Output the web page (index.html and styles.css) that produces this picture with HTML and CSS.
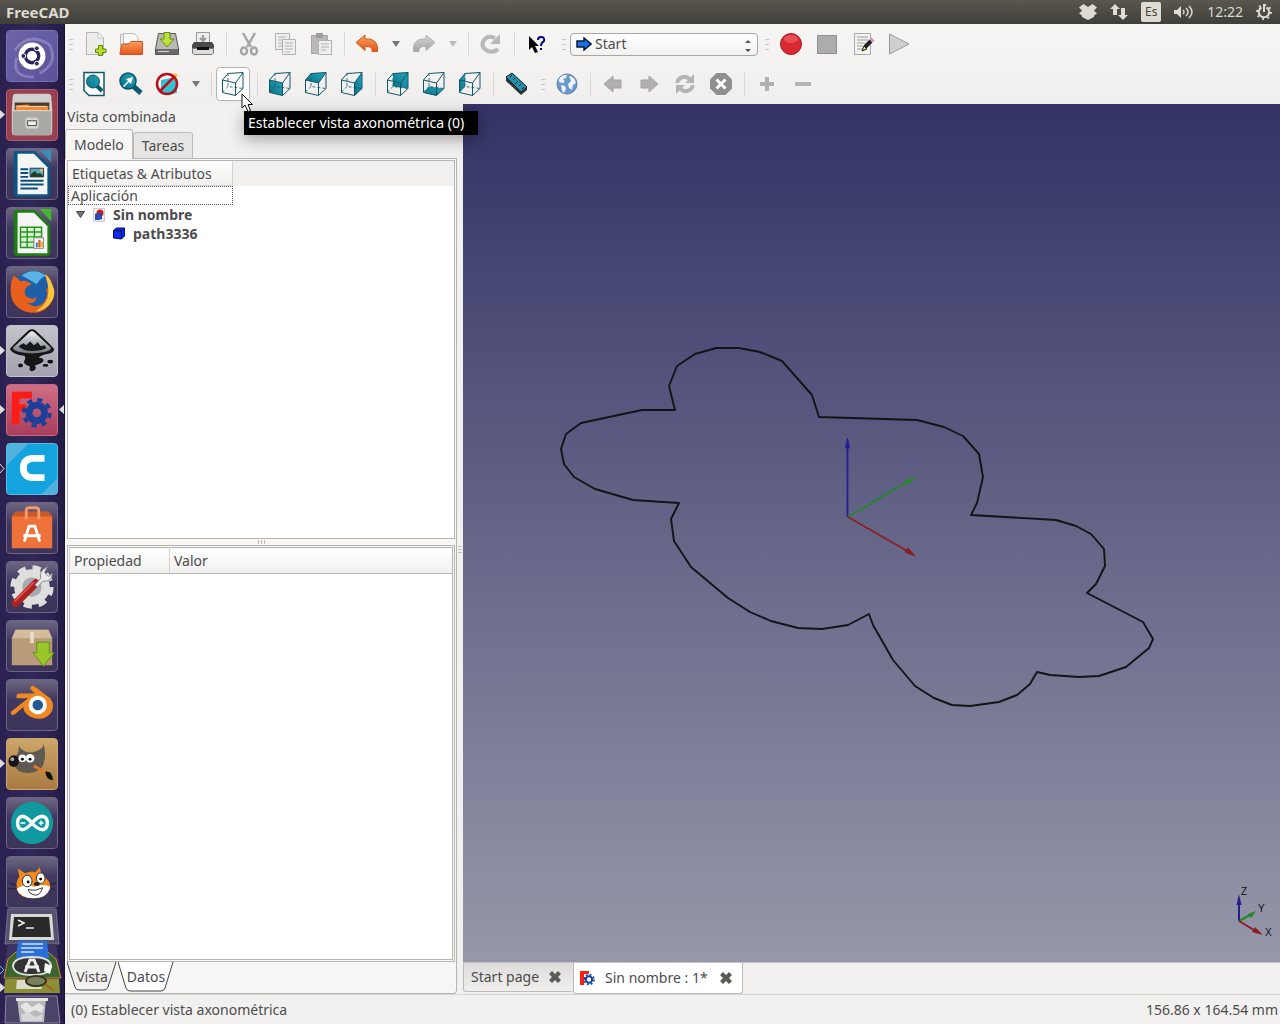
FILE: index.html
```html
<!DOCTYPE html>
<html lang="es">
<head>
<meta charset="utf-8">
<title>FreeCAD</title>
<link rel="stylesheet" href="styles.css">
</head>
<body>
<svg class="defs" aria-hidden="true">
  <defs>
    <linearGradient id="teal" x1="0" y1="1" x2="1" y2="0"><stop offset="0" stop-color="#067085"/><stop offset="1" stop-color="#2aa5ba"/></linearGradient>
    <linearGradient id="orange" x1="0" y1="0" x2="0" y2="1"><stop offset="0" stop-color="#f9a05c"/><stop offset="1" stop-color="#e4551e"/></linearGradient>
    <linearGradient id="grey" x1="0" y1="0" x2="0" y2="1"><stop offset="0" stop-color="#d6d6d5"/><stop offset="1" stop-color="#a3a3a2"/></linearGradient>
    <linearGradient id="steel" x1="0" y1="0" x2="0" y2="1"><stop offset="0" stop-color="#eef1f5"/><stop offset="1" stop-color="#6f7680"/></linearGradient>
    <symbol id="cube" viewBox="0 0 24 26">
      <path d="M7 2V15.500L22 17.500M7 15.500L1 21.500" stroke-dasharray="3 2" stroke-width=".8"/>
      <path d="M1.500 9L14.500 12V24.500L1.500 21.500ZM1.500 9L7 2.500L22 1.500L14.500 12M22 1.500V17.500L14.500 24.500" stroke-width="1"/>
    </symbol>
    <symbol id="freecad" viewBox="0 0 16 16">
      <path d="M1 1h9v3H5v3h3v3H5v5H1z" fill="#ff1f10"/>
      <circle cx="10" cy="9.500" r="3.200" fill="#fff" stroke="#1743a6" stroke-width="2"/>
      <circle cx="10" cy="9.500" r="4.900" fill="none" stroke="#1743a6" stroke-width="1.800" stroke-dasharray="1.900 1.950"/>
    </symbol>
    <symbol id="close" viewBox="0 0 12 12"><path d="M3 0L6 3L9 0L12 3L9 6L12 9L9 12L6 9L3 12L0 9L3 6L0 3Z" fill="#5a5a57"/></symbol>
  </defs>
</svg>

<header class="topbar">
  <h1>FreeCAD</h1>
  <div class="indicators">
    <svg width="18" height="16" viewBox="0 0 18 16"><path d="M4.500 0L9 3L13.500 0L18 3.500L15 6.500L18 9.500L15 11.500V13L9 16L3 13V11.500L0 9.500L3 6.500L0 3.500Z" fill="#dfdbd2"/></svg>
    <svg width="18" height="16" viewBox="0 0 18 16"><path d="M5 0L10 5H7V11H3V5H0ZM13 16L8 11H11V4H15V11H18Z" fill="#dfdbd2"/></svg>
    <span class="lang">Es</span>
    <svg width="20" height="16" viewBox="0 0 20 16" fill="none" stroke="#dfdbd2" stroke-width="1.500"><path d="M0 6h3l4-4v12l-4-4H0z" fill="#dfdbd2" stroke="none"/><path d="M9 6q2 2 0 4M12 4q4 4 0 8M15 2q6 6 0 12"/></svg>
    <span>12:22</span>
    <svg width="16" height="16" viewBox="0 0 16 16" fill="none" stroke="#dfdbd2"><path d="M5.500 3.500A5.200 5.200 0 1 0 10.500 3.500" stroke-width="2"/><circle cx="8" cy="8" r="7" stroke-width="2" stroke-dasharray="1.800 3.700"/><path d="M8 0v8" stroke-width="2"/></svg>
  </div>
</header>

<div class="desktop">
  <nav class="launcher" aria-label="Lanzador">
    <ul>
      <li><button class="tile tile-dash" aria-label="Inicio"><svg viewBox="0 0 52 52"><path d="M8 20Q22 0 44 14M10 28Q4 48 28 48M44 14Q54 34 34 44" stroke="#aaa2d8" stroke-width="3" fill="none" opacity=".5"/><circle cx="26" cy="26" r="14" fill="#fff"/><circle cx="26" cy="26" r="7" fill="none" stroke="#2c2456" stroke-width="3.500"/><g fill="#2c2456" stroke="#fff"><circle cx="17" cy="26" r="2.500"/><circle cx="31" cy="18" r="2.500"/><circle cx="31" cy="34" r="2.500"/></g></svg></button></li>
      <li><svg class="mark" viewBox="0 0 5 9"><path d="M0 0L5 4.500L0 9Z" fill="#ddd"/></svg><button class="tile tile-files" aria-label="Archivos"><svg viewBox="0 0 52 52"><path d="M6 6Q7 4 9 4H43Q45 4 46 6L47 20V44Q47 47 44 47H8Q5 47 5 44V20Z" fill="#d0d0ce"/><path d="M8 13H44V25H8Z" fill="#4c3a30"/><path d="M9 16L22 15L24 17H43V24H9Z" fill="#f08a35"/><path d="M10 17H42" stroke="#fbe0c0"/><path d="M6 21H46V45Q46 47 44 47H8Q6 47 6 45Z" fill="#aaa9a6"/><path d="M6 21.500H46" stroke="#dededc"/><rect x="19.500" y="29" width="13" height="11" rx="2" fill="#d6d6d4" stroke="#c5c5c3"/><rect x="21.500" y="32" width="9" height="5" fill="#eee" stroke="#444"/></svg></button></li>
      <li><button class="tile" aria-label="Writer"><svg viewBox="0 0 52 52"><path d="M9 2H29L45 18V46Q45 50 41 50H11Q7 50 7 46V4Q7 2 9 2Z" fill="#0b5586"/><path d="M11 5H28L42 19V47H11Z" fill="#f5f5f5"/><path d="M34 1H46V14Z" fill="#3c8cba"/><path d="M14 21h8M14 25h8M14 29h8M14 33h24M14 37h24M14 41h18" stroke="#0b4f80" stroke-width="2"/><path d="M24 20H38V29H24Z" fill="#59a9cb" stroke="#234"/><path d="M25 29V26L29 23L32 26L34 25L37 27V29Z" fill="#2b3a20"/><circle cx="36" cy="22" r="1.500" fill="#ffc629"/></svg></button></li>
      <li><button class="tile" aria-label="Calc"><svg viewBox="0 0 52 52"><path d="M9 2H29L45 18V46Q45 50 41 50H11Q7 50 7 46V4Q7 2 9 2Z" fill="#1d7c12"/><path d="M11 5H28L42 19V47H11Z" fill="#f5f5f5"/><path d="M34 1H46V14Z" fill="#44b82c"/><path d="M14 20H36V41H14Z" fill="#d9f5cf" stroke="#279222" stroke-width="1.500"/><path d="M21 20v21M28.500 20v21M14 25h22M14 30h22M14 35.500h22" stroke="#279222" stroke-width="1.500"/><path d="M28 31H38V42H28Z" fill="#fff" stroke="#888"/><path d="M30 41V36h2v5z" fill="#2a7dc0"/><path d="M32.500 41v-8h2.500v8z" fill="#e0602a"/><path d="M35.500 41v-6h2v6z" fill="#e8b02a"/></svg></button></li>
      <li><button class="tile" aria-label="Firefox"><svg viewBox="0 0 52 52"><circle cx="27" cy="25" r="21" fill="#1e5fa8"/><path d="M15 9Q28 0 40 9Q34 12 31 18Q22 12 15 9Z" fill="#58b4e4"/><path d="M7 9Q11 11 14 15Q19 13 23 16L26 18Q20 20 19 23Q17 28 21 31Q27 35 31 31Q29 40 20 37Q31 45 39 36Q44 29 40 21Q48 28 45 14Q53 29 44 40Q35 50 22 47Q6 43 4 28Q3 16 7 9Z" fill="#e8601c"/><path d="M39 7Q45 11 47 18Q53 30 43 40Q37 46 30 46Q43 38 43 26Q43 16 39 7Z" fill="#fbc43a"/></svg></button></li>
      <li><svg class="mark" viewBox="0 0 5 9"><path d="M0 0L5 4.500L0 9Z" fill="#ddd"/></svg><button class="tile tile-ink" aria-label="Inkscape"><svg viewBox="0 0 52 52"><path d="M3 24Q5 21 22 5Q26 2 30 5Q46 20 49 24Q49 28 42 29Q35 30 33 33Q38 33 38 36Q37 39 29 41Q32 45 26 47Q22 46 24 42Q16 40 18 36Q20 33 18 31Q6 30 3 24Z" fill="#161616"/><path d="M6 23L23 7Q26 4 29 7L46 23Q45 26 39 27Q26 30 13 27Q7 26 6 23Z" fill="url(#steel)"/><path d="M12 21L17 18L20 20L24 16L28 20L32 17L35 21L39 20L41 23Q36 26 26 26Q16 26 12 21Z" fill="#17191c"/><ellipse cx="14" cy="41" rx="2.500" ry="2" fill="#111"/><ellipse cx="40" cy="41" rx="3" ry="1.500" fill="#111"/><ellipse cx="45" cy="37" rx="3" ry="2" fill="#111"/></svg></button></li>
      <li><svg class="mark" viewBox="0 0 5 9"><path d="M0 0L5 4.500L0 9Z" fill="#ddd"/></svg><button class="tile tile-freecad" aria-label="FreeCAD"><svg viewBox="0 0 52 52"><path d="M5 7H26V14H13V20H20V27H13V41H5Z" fill="#fb1d15"/><circle cx="31" cy="29" r="8" fill="none" stroke="#1c3f9a" stroke-width="7"/><circle cx="31" cy="29" r="13.500" fill="none" stroke="#1c3f9a" stroke-width="4" stroke-dasharray="5.300 5.300"/></svg></button><svg class="mark mark-right" viewBox="0 0 5 9"><path d="M5 0L0 4.500L5 9Z" fill="#ddd"/></svg></li>
      <li><svg class="mark" viewBox="0 0 5 9"><path d="M0 0L4 4.500L0 9" fill="none" stroke="#ddd"/></svg><button class="tile tile-cura" aria-label="Cura"><svg viewBox="0 0 52 52"><path d="M0 0H22L0 22ZM52 36V52H36Z" fill="#8dbcdc" opacity=".5"/><path d="M39 15H26Q17 16 17 25Q17 34 26 35H39" fill="none" stroke="#fff" stroke-width="7"/></svg></button></li>
      <li><button class="tile" aria-label="Software"><svg viewBox="0 0 52 52"><path d="M5 14L9 9H43L47 14V47H5Z" fill="#ee7139"/><path d="M5 14L9 9H43L47 14Z" fill="#c95928"/><path d="M20 17V8Q20 5 23 5H30Q33 5 33 8V17" fill="none" stroke="#f49a6d" stroke-width="3"/><path d="M18 40L23 24H29L34 40M17 34H35" fill="none" stroke="#fff" stroke-width="3"/></svg></button></li>
      <li><button class="tile" aria-label="Configuración"><svg viewBox="0 0 52 52"><circle cx="26" cy="26" r="14" fill="none" stroke="#dededc" stroke-width="9"/><circle cx="26" cy="26" r="20" fill="none" stroke="#dededc" stroke-width="5" stroke-dasharray="8.500 7.200"/><circle cx="26" cy="26" r="10" fill="#aaa9b0"/><path d="M9 43L30 22" stroke="#a92323" stroke-width="8" stroke-linecap="round"/><path d="M8 41L28 21" stroke="#e4504a" stroke-width="2"/><path d="M29 24L35 17Q33 9 42 5L39 11L43 15L47 12Q47 21 37 20L32 26Z" fill="#e8e8e8" stroke="#8c8c8c"/></svg></button></li>
      <li><button class="tile" aria-label="Paquetes"><svg viewBox="0 0 52 52"><path d="M9 9H43L47 18V46H5V18Z" fill="#b89b78"/><path d="M9 9H43L47 18H5Z" fill="#d3bc9c"/><path d="M24 11H28V23H24Z" fill="#e8dcc8"/><path d="M31 22H44V33H49L38 47L27 33H31Z" fill="#9ac62c" stroke="#5f8f12"/></svg></button></li>
      <li><button class="tile" aria-label="Blender"><svg viewBox="0 0 52 52"><path d="M4 33L22 19H10Q9 14 13 14H29L24 9Q25 4 29 7L45 19Q51 27 45 35Q36 44 24 38Q17 34 17 28L8 36Q3 37 4 33Z" fill="#f08821"/><circle cx="32" cy="26" r="9.500" fill="#fff"/><circle cx="32" cy="26" r="5.500" fill="#245a94"/></svg></button></li>
      <li><svg class="mark" viewBox="0 0 5 9"><path d="M0 0L5 4.500L0 9Z" fill="#ddd"/></svg><button class="tile tile-gimp" aria-label="GIMP"><svg viewBox="0 0 52 52"><path d="M12 7Q20 18 32 12Q38 10 38 5Q42 20 36 30Q28 38 14 34Q5 30 9 18Q13 14 12 7Z" fill="#5f5952"/><ellipse cx="7" cy="23" rx="5.500" ry="6" fill="#151515"/><ellipse cx="5.500" cy="21" rx="2" ry="2" fill="#aaa"/><circle cx="16" cy="20" r="4" fill="#fff"/><circle cx="24" cy="20" r="4.500" fill="#fff"/><circle cx="16" cy="21" r="1.500"/><circle cx="24" cy="21" r="1.500"/><path d="M28 28L42 36" stroke="#e07a28" stroke-width="3"/><path d="M40 34Q47 33 48 43Q40 42 40 34Z" fill="#111"/></svg></button></li>
      <li><button class="tile" aria-label="Arduino"><svg viewBox="0 0 52 52"><circle cx="26" cy="26" r="22" fill="#10999e"/><path d="M26 26Q20 19 16 19Q11 20 11 26Q11 32 16 33Q20 33 26 26Q32 19 37 19Q42 20 42 26Q42 32 37 33Q32 33 26 26Z" fill="none" stroke="#fff" stroke-width="3.500"/><path d="M14 26H19M33 26H38M35.500 23.500V28.500" stroke="#fff" stroke-width="1.500"/></svg></button></li>
      <li><button class="tile" aria-label="Scratch"><svg viewBox="0 0 52 52"><path d="M11 12L19 17Q26 14 29 16L34 11L36 19Q46 24 45 33Q40 43 27 43Q10 42 10 31Q9 26 13 20Z" fill="#f08a1c"/><path d="M10 33Q20 27 28 31Q37 27 45 31Q42 43 28 43Q14 43 10 33Z" fill="#fff"/><ellipse cx="21" cy="25" rx="5" ry="6" fill="#fff" stroke="#333"/><ellipse cx="35" cy="22" rx="4.500" ry="5.500" fill="#fff" stroke="#333"/><circle cx="22" cy="26" r="1.500"/><circle cx="35" cy="23" r="1.500"/><ellipse cx="31" cy="28" rx="3" ry="2" fill="#222"/><path d="M22 34Q30 36 37 32Q34 42 27 39Q23 38 22 34Z" fill="#fff" stroke="#333"/><path d="M3 27L10 30M2 33H10M45 29L51 27M45 32L50 34" stroke="#222"/></svg></button></li>
    </ul>
    <svg class="stack" viewBox="0 0 65 116" role="img" aria-label="Más aplicaciones">
      <path d="M8 1H56L59 36H5Z" fill="#57506f" stroke="#77708c"/><path d="M11 6H52L54 32H9Z" fill="#d9d9d6"/><path d="M14 9H49L51 29H12Z" fill="#292929"/><path d="M18 12L24 15L18 18M26 20H34" fill="none" stroke="#eee" stroke-width="1.500"/>
      <path d="M8 36H56L60 62H4Z" fill="#3d3561"/><path d="M8 51L16 44H48L56 51L61 70H4Z" fill="#39652f" stroke="#d9863e"/>
      <path d="M18 33H47L49 50H16Z" fill="#2a6fd8"/><path d="M22 36H43M21 40H43M21 44H34" stroke="#cfe2ff" stroke-width="1.500"/>
      <path d="M13 58Q14 49 32 49Q50 49 51 58Q50 67 32 67Q14 67 13 58Z" fill="#333" stroke="#ddd" stroke-width="2"/><path d="M25 64L30 52H34L39 64M25 59H39" fill="none" stroke="#ededed" stroke-width="3"/><path d="M45 55L52 58L50 66L44 63Z" fill="#fff"/>
      <path d="M5 71H59L60 85H4Z" fill="#8a8f35"/><path d="M17 72H40L42 81H16Z" fill="#d8dcc8"/><ellipse cx="36" cy="73" rx="10" ry="5" fill="#78805e" stroke="#33351c" stroke-width="2"/><path d="M45 76L54 83" stroke="#a0612c" stroke-width="2"/>
      <path d="M6 88H57L60 115H5Z" fill="#4a4468" stroke="#8982a0"/><path d="M17 90H46L44 114H20Z" fill="#b9b9ba"/><path d="M16 90H48V93H16ZM20 98L26 94L32 99L39 95L44 99L42 105L35 102L27 106Z" fill="#e6e6e6"/><path d="M21 107L28 104L36 109L43 106L42 113H22Z" fill="#d6d6d8"/>
      <path d="M0 58L4 62L0 66" fill="none" stroke="#6cc4ee"/><path d="M0 75L5 79.500L0 84Z" fill="#ddd"/>
    </svg>
  </nav>

  <div class="app">
    <div class="toolbars">
      <div class="toolbar" role="toolbar" aria-label="Archivo">
        <i class="grip"></i>
        <button aria-label="Nuevo"><svg width="24" height="24" viewBox="0 0 24 24"><path d="M3.500.500H15L20.500 6V22.500H3.500Z" fill="#ececea" stroke="#b5b5b2"/><path d="M15 .500V6H20.500Z" fill="#fff" stroke="#c5c5c2"/><path d="M15.500 13.500H19.500V17H23V20.500H19.500V23.500H15.500V20.500H12.500V17H15.500Z" fill="#b6dd2c" stroke="#5f8a10"/></svg></button>
        <button aria-label="Abrir"><svg width="24" height="24" viewBox="0 0 24 24"><path d="M1.500 2.500H12V20H1.500Z" fill="#eee" stroke="#bbb"/><path d="M4.500 1.500H15L19 5V12H4.500Z" fill="#fafafa" stroke="#bbb"/><path d="M1 21L3 12H10L12 9.500H23.500V22.500H1Z" fill="url(#orange)" stroke="#d8501e"/></svg></button>
        <button aria-label="Guardar"><svg width="24" height="24" viewBox="0 0 24 24"><path d="M3.500 1.500H20.500L23.500 17V22.500H.500V17Z" fill="#b9b9b6" stroke="#555"/><path d="M1 17H23V22H1Z" fill="#6b6b69"/><path d="M3 19.500H14" stroke="#ddd"/><path d="M9 .500H15V7H19L12 15L5 7H9Z" fill="#bde03a" stroke="#5d8f12"/></svg></button>
        <button aria-label="Imprimir"><svg width="24" height="24" viewBox="0 0 24 24"><path d="M5.500.500H18.500V12H5.500Z" fill="#eee" stroke="#999"/><path d="M12 3V9M9 6L12 9L15 6" stroke="#999" stroke-width="2" fill="none"/><path d="M3 10H21L23 13V17H1V13Z" fill="#4a4a4a"/><path d="M1.500 16.500H22.500V21L21 22.500H3L1.500 21Z" fill="#ddd" stroke="#777"/><path d="M6 15H18V18H6Z" fill="#111"/></svg></button>
        <i class="sep"></i>
        <button aria-label="Cortar"><svg width="24" height="24" viewBox="0 0 24 24" fill="none" stroke="#a5a5a4"><path d="M6 1L14 15M18 1L10 15" stroke-width="2.500"/><ellipse cx="7" cy="19" rx="3" ry="3.500" stroke-width="2.500"/><ellipse cx="17" cy="19" rx="3" ry="3.500" stroke-width="2.500"/></svg></button>
        <button aria-label="Copiar"><svg width="24" height="24" viewBox="0 0 24 24" fill="#eeeeec" stroke="#b2b2b1"><path d="M2.500 1.500H16.500V17.500H2.500Z"/><path d="M5 5H13M5 8H9M5 11H9M5 14H9"/><path d="M9.500 7.500H22.500V22.500H9.500Z"/><path d="M12 11H20M12 14H20M12 17H20M12 20H17"/></svg></button>
        <button aria-label="Pegar"><svg width="24" height="24" viewBox="0 0 24 24"><path d="M2.500 3.500H18.500V21.500H2.500Z" fill="#b9b9b8" stroke="#a5a5a4"/><path d="M7 1H14V6H7Z" fill="#9c9c9b"/><path d="M9.500 8.500H22.500V22.500H9.500Z" fill="#eeeeec" stroke="#b2b2b1"/><path d="M12 12H20M12 15H20M12 18H17" stroke="#b2b2b1"/></svg></button>
        <i class="sep"></i>
        <button aria-label="Deshacer"><svg width="24" height="20" viewBox="0 0 24 20"><path d="M1 8.500L10 1V5Q21 4 22.500 13V17.500H17Q18 12 10 12.500V16.500Z" fill="url(#orange)" stroke="#d7591f"/></svg></button>
        <button class="drop" aria-label="Historial de deshacer"><svg width="8" height="6" viewBox="0 0 8 6"><path d="M0 0H8L4 6Z" fill="#777"/></svg></button>
        <button aria-label="Rehacer"><svg width="24" height="20" viewBox="0 0 24 20"><path d="M23 8.500L14 1V5Q3 4 1.500 13V17.500H7Q6 12 14 12.500V16.500Z" fill="url(#grey)" stroke="#b0b0af"/></svg></button>
        <button class="drop" aria-label="Historial de rehacer"><svg width="8" height="6" viewBox="0 0 8 6"><path d="M0 0H8L4 6Z" fill="#bbb"/></svg></button>
        <i class="sep"></i>
        <button aria-label="Actualizar"><svg width="24" height="24" viewBox="0 0 24 24"><path d="M19 17Q15 21 9 19Q2 16 4 10Q8 2 16 6" fill="none" stroke="#b8b8b7" stroke-width="4"/><path d="M21 2V12H11Z" fill="#b8b8b7"/></svg></button>
        <i class="sep"></i>
        <button aria-label="¿Qué es esto?"><svg width="20" height="20" viewBox="0 0 20 20"><path d="M2 2V16L5 13L8 19L11 18L8 12H12Z" fill="#000"/><path d="M11 6Q11 3 14 3Q18 3 17 7Q14 9 14 12M14 14V16" fill="none" stroke="#00007e" stroke-width="2"/></svg></button>
        <i class="grip grip-mid"></i>
        <label class="bench">
          <svg class="bench-icon" width="16" height="14" viewBox="0 0 16 14"><path d="M1 4H8V1L15 7L8 13V10H1Z" fill="#1f6fe0" stroke="#0a1a40" stroke-width="1.500"/></svg>
          <select aria-label="Entorno de trabajo"><option>Start</option></select>
          <svg class="bench-spin" width="6" height="12" viewBox="0 0 6 12"><path d="M0 3L3 0L6 3ZM0 9L3 12L6 9Z" fill="#555"/></svg>
        </label>
        <i class="grip grip-mid"></i>
        <button aria-label="Grabar macro"><svg width="24" height="24" viewBox="0 0 24 24"><circle cx="12" cy="12" r="10.500" fill="#d92a33" stroke="#a41720"/><ellipse cx="12" cy="7" rx="7" ry="4" fill="#f2696a" opacity=".6"/></svg></button>
        <button aria-label="Detener"><svg width="24" height="24" viewBox="0 0 24 24"><path d="M2.500 3.500H21.500V21.500H2.500Z" fill="#acacab" stroke="#8e8e8d"/></svg></button>
        <button aria-label="Macros"><svg width="24" height="24" viewBox="0 0 24 24"><path d="M3.500 1.500H19.500V22.500H3.500Z" fill="#f4f4f4" stroke="#aaa"/><path d="M6 5H17M6 8H17M6 11H14M6 14H12M6 17H11" stroke="#999"/><path d="M11 19L13 14L16 17Z" fill="#e8d24a" stroke="#222"/><path d="M14 15L20 9" stroke="#222" stroke-width="4"/><path d="M20 9L22 7" stroke="#d98ac4" stroke-width="4"/></svg></button>
        <button aria-label="Ejecutar macro"><svg width="24" height="24" viewBox="0 0 24 24"><path d="M2.500 2L22 12L2.500 22Z" fill="#cfcfce" stroke="#9c9c9b"/></svg></button>
      </div>

      <div class="toolbar" role="toolbar" aria-label="Vista">
        <i class="grip"></i>
        <button aria-label="Ajustar todo"><svg width="24" height="26" viewBox="0 0 24 26"><path d="M1 1.500H21V24.500H6L1 19.500Z" fill="#fff" stroke="#12556a" stroke-width="1.500"/><path d="M13 14L19 20" stroke="#0b5b70" stroke-width="4"/><circle cx="10" cy="10.500" r="6.500" fill="url(#teal)" stroke="#0d5265"/></svg></button>
        <button aria-label="Ajustar selección"><svg width="26" height="26" viewBox="0 0 26 26"><path d="M15 15L23 22" stroke="#0b5b70" stroke-width="5"/><circle cx="10" cy="10" r="8" fill="url(#teal)" stroke="#0d5265" stroke-width="1.500"/><path d="M5 15L10 10L8 8L15 6L13 13L11 11L6 16Z" fill="#fff"/></svg></button>
        <button aria-label="Estilo de dibujo"><svg width="24" height="26" viewBox="0 0 24 26"><path d="M6 9L16 7L22 10V22L11 24L6 20Z" fill="#2ec4d4"/><path d="M12 15L20 2L23 4Z" fill="#f6c21c"/><circle cx="12" cy="13" r="10" fill="none" stroke="#b80d1a" stroke-width="2.500"/><path d="M5 20L19 6" stroke="#b80d1a" stroke-width="2.500"/></svg></button>
        <button class="drop" aria-label="Más estilos"><svg width="8" height="6" viewBox="0 0 8 6"><path d="M0 0H8L4 6Z" fill="#777"/></svg></button>
        <i class="sep"></i>
        <div class="hovered">
          <button aria-label="Axonométrica" aria-describedby="tip"><svg class="cube" width="24" height="26"><use href="#cube"/></svg></button>
          <span class="tip" id="tip" role="tooltip">Establecer vista axonométrica (0)</span>
          <svg class="pointer" width="13" height="20" viewBox="0 0 13 20"><path d="M1 1V15L4 12L7 18.500L9.500 17.500L7 11.500H11.500Z" fill="#fff" stroke="#111"/></svg>
        </div>
        <i class="sep"></i>
        <button aria-label="Frontal"><svg class="cube" width="24" height="26" viewBox="0 0 24 26"><path class="face" d="M1.500 9L14.500 12V24.500L1.500 21.500Z"/><use href="#cube"/></svg></button>
        <button aria-label="Superior"><svg class="cube" width="24" height="26" viewBox="0 0 24 26"><path class="face" d="M1.500 9L14.500 12L22 1.500L7 2.500Z"/><use href="#cube"/></svg></button>
        <button aria-label="Derecha"><svg class="cube" width="24" height="26" viewBox="0 0 24 26"><path class="face" d="M14.500 12L22 1.500V17.500L14.500 24.500Z"/><use href="#cube"/></svg></button>
        <i class="sep"></i>
        <button aria-label="Posterior"><svg class="cube" width="24" height="26" viewBox="0 0 24 26"><path class="face" d="M7 2.500L22 1.500V17.500L7 15.500Z"/><use href="#cube"/></svg></button>
        <button aria-label="Inferior"><svg class="cube" width="24" height="26" viewBox="0 0 24 26"><path class="face" d="M7 15.500L22 17.500L14.500 24.500L1.500 21.500Z"/><use href="#cube"/></svg></button>
        <button aria-label="Izquierda"><svg class="cube" width="24" height="26" viewBox="0 0 24 26"><path class="face" d="M7 2.500V15.500L1.500 21.500V9Z"/><use href="#cube"/></svg></button>
        <i class="sep"></i>
        <button aria-label="Medir"><svg width="24" height="24" viewBox="0 0 24 24"><path d="M2 5L8 1L23 15V18L17 23L2 9Z" fill="#333"/><path d="M2 5L8 1L23 15L17 20Z" fill="#1c93b0" stroke="#123"/><path d="M8 3L6 5M11 6L9 8M14 9L11 12M17 12L15 14M20 15L18 17" stroke="#000"/></svg></button>
        <i class="grip grip-mid"></i>
        <button aria-label="Abrir web"><svg width="24" height="24" viewBox="0 0 24 24"><circle cx="12" cy="12" r="10" fill="#6a97cc" stroke="#5b7fae"/><path d="M4 7Q8 2 12 3L11 6L8 7L10 10L7 11L4 10ZM6 13L10 14L11 17L9 21L7 19ZM14 4Q20 5 21 11L18 13L17 18L14 16L13 12L16 9Z" fill="#edf3f8"/></svg></button>
        <i class="sep"></i>
        <button aria-label="Atrás"><svg width="20" height="20" viewBox="0 0 20 20"><path d="M1 10L10 2V6H18V14H10V18Z" fill="#b0b0af" stroke="#a5a5a4"/></svg></button>
        <button aria-label="Adelante"><svg width="20" height="20" viewBox="0 0 20 20"><path d="M19 10L10 2V6H2V14H10V18Z" fill="#b0b0af" stroke="#a5a5a4"/></svg></button>
        <button aria-label="Recargar"><svg width="22" height="22" viewBox="0 0 22 22" fill="none" stroke="#b4b4b3" stroke-width="4"><path d="M3 10Q5 3 12 4L16 6M19 12Q17 19 10 18L6 16"/><path d="M20 1V10H11ZM2 21V12H11Z" fill="#b4b4b3" stroke="none"/></svg></button>
        <button aria-label="Parar carga"><svg width="24" height="24" viewBox="0 0 24 24"><path d="M7.500 1H16.500L23 7.500V16.500L16.500 23H7.500L1 16.500V7.500Z" fill="#8f8f8e"/><path d="M7.500 7.500L16.500 16.500M16.500 7.500L7.500 16.500" stroke="#fff" stroke-width="3"/></svg></button>
        <i class="sep"></i>
        <button aria-label="Acercar"><svg width="16" height="16" viewBox="0 0 16 16"><path d="M8 1V15M1 8H15" stroke="#b0b0af" stroke-width="4"/></svg></button>
        <button aria-label="Alejar"><svg width="16" height="16" viewBox="0 0 16 16"><path d="M0 8H16" stroke="#b4b4b3" stroke-width="4"/></svg></button>
      </div>
    </div>

    <main class="workspace">
      <aside class="dock">
        <h2>Vista combinada</h2>
        <div class="tabs" role="tablist">
          <button class="tab tab-on" role="tab" aria-selected="true">Modelo</button>
          <button class="tab" role="tab">Tareas</button>
        </div>
        <div class="pane">
          <section class="tree">
            <div class="tree-head"><span>Etiquetas &amp; Atributos</span></div>
            <ul>
              <li class="root">Aplicación</li>
              <li class="doc"><svg width="9" height="7" viewBox="0 0 9 7"><path d="M.500.500H8.500L4.500 6.500Z" fill="#777" stroke="#444"/></svg><svg width="12" height="14" viewBox="0 0 12 14"><path d="M.500.500H11.500V13.500H.500Z" fill="#eee" stroke="#ccc"/><circle cx="7" cy="5" r="3.500" fill="#cf1a1e"/><path d="M2 6L5 5H9V11L6 12H2Z" fill="#2b49b0"/></svg>Sin nombre</li>
              <li class="part"><svg width="14" height="13" viewBox="0 0 14 13"><path d="M1.500 3.500L4.500 1H12.500V9L9.500 12L1.500 11Z" fill="#0b2cf5" stroke="#000a50"/><path d="M1.500 3.500L9.500 4L12.500 1M9.500 4V12" fill="none" stroke="#000a50"/></svg>path3336</li>
            </ul>
          </section>
          <div class="splitter"></div>
          <section class="props">
            <table>
              <thead><tr><th class="prop-name">Propiedad</th><th>Valor</th></tr></thead>
            </table>
          </section>
          <div class="slant-tabs" role="tablist">
            <button role="tab"><svg viewBox="0 0 50 30" preserveAspectRatio="none"><path d="M0 0L8 25Q9 28 12 28H37Q40 28 41 25L49 0" fill="#f2f1f0" stroke="#444"/></svg><span>Vista</span></button>
            <button role="tab" aria-selected="true"><svg viewBox="0 0 56 30" preserveAspectRatio="none"><path d="M0 0L8 26Q9 29 12 29H43Q46 29 47 26L55 0" fill="#fff" stroke="#444"/></svg><span>Datos</span></button>
          </div>
        </div>
      </aside>
      <div class="divider"></div>
      <section class="viewer">
        <div class="scene">
          <svg class="model" viewBox="463 104 817 858" role="img" aria-label="path3336">
            <path d="M675 410L669 386L677 366L695 354L716 348L739 348L760 352L782 361L812 395L819 417L917 420L944 427L963 436L979 454L983 477L977 503L971 515L1056 520L1076 526L1091 534L1104 549L1105 566L1096 584L1087 593L1143 622L1153 639L1149 648L1126 667L1099 676L1079 677L1050 675L1037 672L1030 684L1017 695L999 702L970 706L952 705L934 698L915 686L893 660L873 625L869 614L848 625L822 629L798 628L771 621L750 612L728 598L691 567L674 541L671 519L679 503L633 500L595 489L574 477L564 464L561 449L566 434L581 423L642 410Z" fill="none" stroke="#141416" stroke-width="1.900" stroke-linejoin="round"/>
            <path d="M847.500 517V445" stroke="#22208c" stroke-width="1.800"/><path d="M847.500 438L849.500 448H845.500Z" fill="#22208c" stroke="#22208c"/>
            <path d="M848 517L909 481" stroke="#1f8a22" stroke-width="1.600"/><path d="M915 478L908 484L905 481Z" fill="#1f8a22" stroke="#1f8a22"/>
            <path d="M848 517L909 552" stroke="#8a1e22" stroke-width="1.600"/><path d="M915 556L905 552L908 548Z" fill="#8a1e22" stroke="#8a1e22"/>
          </svg>
          <svg class="compass" width="40" height="56" viewBox="0 0 40 56" aria-hidden="true">
            <path d="M5 39V20" stroke="#22208c" stroke-width="2"/><path d="M5 12L7.500 23H2.500Z" fill="#22208c"/>
            <path d="M5 39L16 33" stroke="#1f8a22" stroke-width="2"/><path d="M22 29L17 36L14 32Z" fill="#1f8a22"/>
            <path d="M5 39L20 48" stroke="#8a1e22" stroke-width="2"/><path d="M29 53L18 50L21 45Z" fill="#8a1e22"/>
            <text x="7" y="13">Z</text><text x="24" y="30">Y</text><text x="31" y="54">X</text>
          </svg>
        </div>
        <div class="doc-tabs">
          <div class="doc-tab"><span>Start page</span><button aria-label="Cerrar Start page"><svg width="12" height="12"><use href="#close"/></svg></button></div>
          <div class="doc-tab doc-tab-on"><svg width="16" height="16"><use href="#freecad"/></svg><span>Sin nombre : 1*</span><button aria-label="Cerrar Sin nombre"><svg width="12" height="12"><use href="#close"/></svg></button></div>
        </div>
      </section>
    </main>
    <footer class="status"><span>(0) Establecer vista axonométrica</span><span>156.86 x 164.54 mm</span></footer>
  </div>
</div>
</body>
</html>
```
FILE: styles.css
```css
* { box-sizing: border-box; }
body {
  margin: 0;
  min-height: 100vh;
  display: flex;
  flex-direction: column;
  font: 14px/20px "Noto Sans", "Open Sans", sans-serif;
  color: #4c4c4c;
  background: #f2f1f0;
}
button {
  margin: 0;
  padding: 0;
  border: 0;
  background: none;
  font: inherit;
  color: inherit;
}
ul { list-style: none; margin: 0; padding: 0; }
svg { display: block; flex: none; }
.defs { position: absolute; width: 0; height: 0; }

.topbar {
  height: 24px;
  padding: 0 8px 0 6px;
  display: flex;
  align-items: center;
  justify-content: space-between;
  color: #dfdbd2;
  background: linear-gradient(#59574f, #3f3e39);
}
.topbar h1 { margin: 0; font-size: 15px; line-height: 20px; }
.indicators { display: flex; align-items: center; gap: 13px; }
.lang {
  width: 20px;
  height: 20px;
  border-radius: 2px;
  background: #dfdbd2;
  color: #45443f;
  font-size: 12px;
  text-align: center;
}

.desktop { flex: 1; display: flex; }
.launcher {
  width: 65px;
  flex: none;
  padding-top: 6px;
  border-right: 1px solid #17112e;
  background: linear-gradient(90deg, #2a2150, #322859 50%, #241c46);
}
.launcher ul { display: flex; flex-direction: column; gap: 7px; }
.launcher li { position: relative; padding-left: 6px; }
.tile {
  display: block;
  width: 52px;
  height: 52px;
  border: 1px solid #6b6485;
  border-radius: 4px;
  background: linear-gradient(#6d6781, #40385f 40%, #3c3459);
}
.tile svg { width: 50px; height: 50px; }
.tile-dash { background: linear-gradient(135deg, #6c64a6, #5b529b); border-color: #7870b0; }
.tile-files { background: #983f50; border-color: #a95f6c; }
.tile-ink { background: linear-gradient(#c3c3cb, #a2a1ae); border-color: #c4c3cd; }
.tile-freecad { background: linear-gradient(#cf6f86, #a93e5c); border-color: #c46a82; }
.tile-cura { background: #13a4e0; border-color: #5cbde4; }
.tile-gimp { background: linear-gradient(#cda669, #a97b40); border-color: #c9a673; }
.mark { position: absolute; left: 0; top: 21px; width: 5px; height: 9px; }
.mark-right { left: auto; right: 0; }
.stack { width: 65px; height: 116px; }

.app { flex: 1; min-width: 0; display: flex; flex-direction: column; }
.toolbars { background: linear-gradient(#f6f5f4, #f0efed); }
.toolbar { height: 40px; display: flex; align-items: center; }
.toolbar button {
  width: 36px;
  height: 34px;
  flex: none;
  display: flex;
  align-items: center;
  justify-content: center;
}
.toolbar .drop { width: 21px; }
.grip {
  width: 12px;
  height: 11px;
  flex: none;
  padding: 0 4px;
  background: repeating-linear-gradient(#c9c8c6 0 1px, transparent 1px 5px) content-box;
}
.grip-mid { margin-left: 3px; }
.sep { width: 10px; height: 24px; flex: none; padding: 0 4px 0 5px; background: #dad9d7 content-box; }
.bench { position: relative; width: 188px; flex: none; }
.bench select {
  appearance: none;
  display: block;
  width: 100%;
  height: 23px;
  padding: 0 20px 0 24px;
  border: 1px solid #a9a8a5;
  border-radius: 4px;
  background: linear-gradient(#fff, #f3f2f1);
  font: inherit;
  line-height: 20px;
  color: inherit;
}
.bench-icon { position: absolute; left: 6px; top: 4px; }
.bench-spin { position: absolute; right: 7px; top: 7px; }
.cube { fill: none; stroke: #12556a; }
.face { fill: url(#teal); stroke: none; }
.hovered { position: relative; }
.toolbar .hovered button {
  width: 34px;
  margin-right: 2px;
  border: 1px solid #b4b3b0;
  border-radius: 4px;
  background: #fff;
}
.tip {
  position: absolute;
  z-index: 2;
  left: 28px;
  top: 44px;
  width: 234px;
  height: 24px;
  padding: 2px 4px;
  white-space: nowrap;
  color: #fff;
  background: #000;
  box-shadow: 0 4px 16px rgba(0, 0, 0, .35);
}
.pointer { position: absolute; z-index: 3; left: 25px; top: 26px; }

.workspace { flex: 1; display: flex; }
.dock { width: 392px; flex: none; display: flex; flex-direction: column; }
.dock h2 { margin: 0; padding: 3px 2px 2px; font-size: 14px; font-weight: 400; line-height: 20px; }
.tabs { height: 29px; display: flex; align-items: flex-end; }
.tab { height: 26px; padding: 0 8px; border: 1px solid #bcbbb8; border-bottom: 0; border-radius: 3px 3px 0 0; background: #e6e5e3; }
.tab-on { height: 30px; margin-bottom: -1px; z-index: 1; background: #f7f6f5; }
.pane {
  flex: 1;
  display: flex;
  flex-direction: column;
  padding: 1px 1px 0 2px;
  border: 1px solid #b6b5b2;
  border-left: 0;
  border-radius: 0 0 4px 0;
  background: #f7f6f5;
}
.tree { height: 379px; border: 1px solid #b6b5b2; background: #fff; }
.tree-head { height: 25px; background: #f1f0ee; }
.tree-head span {
  display: block;
  width: 165px;
  height: 25px;
  padding: 3px 4px 1px;
  border-right: 1px solid #d5d4d2;
  border-bottom: 1px solid #d5d4d2;
  background: linear-gradient(#fff, #f1f0ee);
}
.tree li { height: 19px; line-height: 19px; display: flex; align-items: center; }
.tree .root { width: 165px; padding-left: 2px; border: 1px dotted #555; }
.doc, .part { font-weight: 700; }
.doc { gap: 8px; padding-left: 8px; }
.part { gap: 7px; padding-left: 44px; }
.splitter {
  height: 6px;
  background: repeating-linear-gradient(90deg, #b8b7b4 0 1px, transparent 1px 3px) center / 7px 4px no-repeat;
}
.props { flex: 1; padding: 1px; border: 1px solid #b6b5b2; display: flex; flex-direction: column; }
.props::after { content: ""; flex: 1; border: 1px solid #b6b5b2; border-top: 0; background: #fff; }
.props table { width: 100%; border-collapse: collapse; table-layout: fixed; }
.props th {
  height: 26px;
  padding: 0 4px;
  border: 1px solid #b6b5b2;
  border-left-color: #d5d4d2;
  text-align: left;
  font-weight: 400;
  background: linear-gradient(#fff, #f1f0ee);
}
.props .prop-name { width: 100px; border-right-color: #d5d4d2; }
.slant-tabs { height: 31px; display: flex; gap: 1px; }
.slant-tabs button { position: relative; width: 50px; height: 30px; }
.slant-tabs button + button { width: 56px; }
.slant-tabs svg { position: absolute; inset: 0; width: 100%; height: 100%; }
.slant-tabs span { position: relative; }
.divider {
  width: 6px;
  flex: none;
  background: repeating-linear-gradient(#bfbebb 0 1px, transparent 1px 3px) center / 4px 7px no-repeat;
}

.viewer { flex: 1; min-width: 0; display: flex; flex-direction: column; }
.scene { flex: 1; position: relative; background: linear-gradient(#333366, #9797aa); }
.model { position: absolute; inset: 0; width: 100%; height: 100%; }
.compass { position: absolute; right: 6px; bottom: 24px; }
.compass text { font: 10px "Liberation Sans", sans-serif; fill: #111; }
.doc-tabs { height: 32px; display: flex; align-items: flex-start; border-top: 1px solid #c5c4c2; }
.doc-tab {
  height: 29px;
  padding: 0 12px 0 7px;
  display: flex;
  align-items: center;
  gap: 10px;
  border: 1px solid #bcbbb8;
  border-top: 0;
  border-right: 0;
  border-radius: 0 0 3px 3px;
  background: linear-gradient(#dddcda, #f0efed);
}
.doc-tab-on { height: 31px; padding: 0 10px 0 5px; border-right: 1px solid #bcbbb8; background: #fff; }
.doc-tab-on button { margin-left: 2px; }

.status {
  height: 30px;
  padding: 0 2px 0 6px;
  display: flex;
  align-items: center;
  justify-content: space-between;
  border-top: 1px solid #d6d5d3;
}
```
